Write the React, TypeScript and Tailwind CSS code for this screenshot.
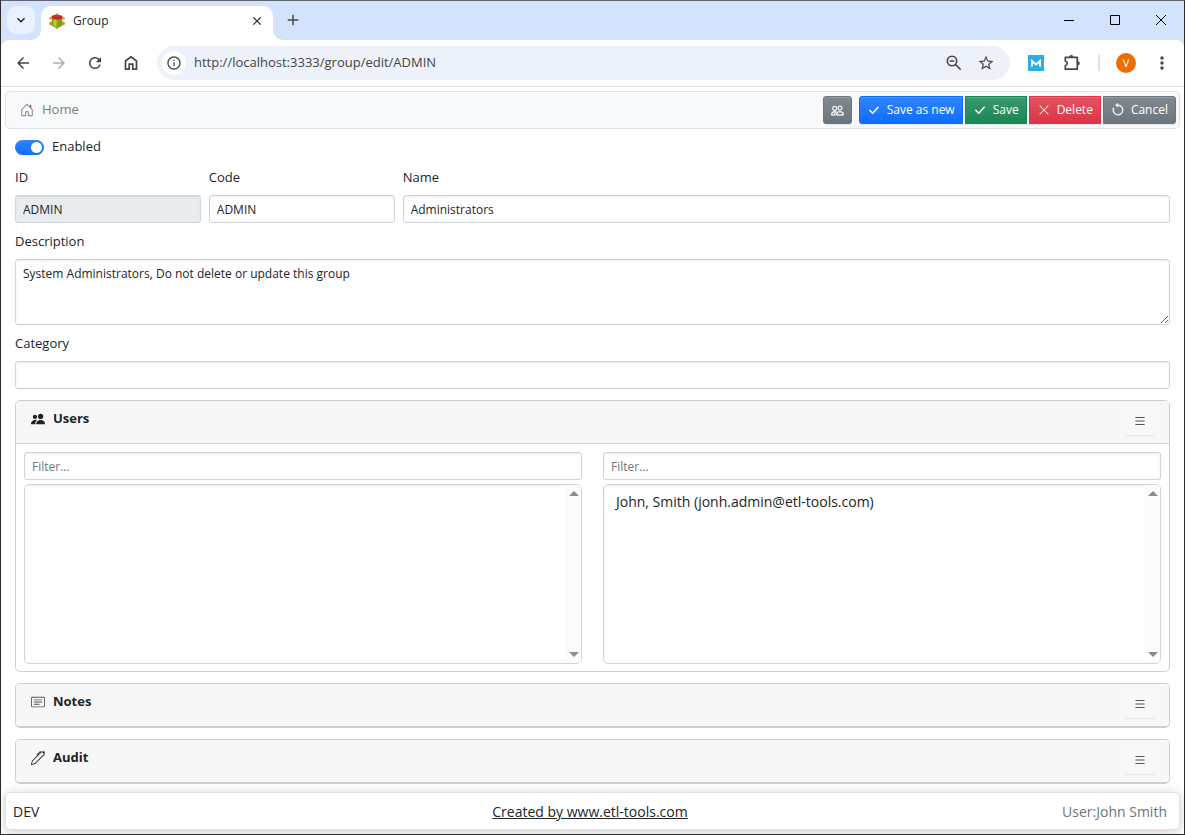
import React, { useState } from 'react';
import {
  BsArrowCounterclockwise,
  BsCardText,
  BsHouseDoor,
  BsList,
  BsPen,
  BsPeople,
  BsPeopleFill,
  BsXLg,
} from 'react-icons/bs';
import {
  MdAdd,
  MdArrowBack,
  MdArrowForward,
  MdClose,
  MdInfoOutline,
  MdKeyboardArrowDown,
  MdMoreVert,
  MdRefresh,
  MdStarBorder,
} from 'react-icons/md';

const inputClass =
  'block w-full h-7 rounded-[3px] border border-[#ced4da] bg-white px-[7px] text-[12px] text-[#212529] shadow-[inset_0_1px_2px_rgba(0,0,0,0.075)] outline-none focus:border-[#86b7fe] placeholder:text-[#6c757d]';
const labelClass = 'block h-9 leading-9 text-[13px]';

function TurtleLogo() {
  return (
    <svg viewBox="0 0 16 16" className="w-4 h-4 shrink-0" aria-hidden="true">
      <circle cx="8" cy="1.900" r="1.700" fill="#d9a441" />
      <circle cx="1.800" cy="5.200" r="1.600" fill="#e8a04e" />
      <circle cx="14.200" cy="5.200" r="1.600" fill="#e8a04e" />
      <circle cx="2" cy="10.500" r="1.900" fill="#ec8a2a" />
      <circle cx="14" cy="10.500" r="1.900" fill="#ec8a2a" />
      <path d="M6 13h4l-.8 2.700H6.800z" fill="#d9922e" />
      <path d="M2.800 4h10.400v7.500c0 1.700-2.500 3-5.200 3s-5.200-1.300-5.200-3z" fill="#6fa516" />
      <path d="M4.500 6.500h3v7.300c-2-.2-3-1.100-3-2.300z" fill="#b5d330" />
      <ellipse cx="8" cy="4" rx="5.400" ry="2.300" fill="#e01c10" />
      <ellipse cx="8" cy="3.200" rx="2.400" ry="1" fill="#a8452a" />
      <circle cx="8" cy="8.800" r="1.200" fill="#e0932c" />
    </svg>
  );
}

function HomeGlyph() {
  return (
    <svg viewBox="0 0 20 20" className="w-5 h-5" fill="none" stroke="currentColor" strokeWidth="1.7" aria-hidden="true">
      <path d="M4.500 8 10 3.800 15.500 8v8.200h-3.700v-5H8.200v5H4.500z" />
    </svg>
  );
}

function ZoomOutGlyph() {
  return (
    <svg viewBox="0 0 20 20" className="w-5 h-5" fill="none" stroke="currentColor" strokeWidth="1.6" aria-hidden="true">
      <circle cx="8" cy="8" r="4.700" />
      <path d="M11.400 11.400 16.700 16.700M5.700 8h4.600" />
    </svg>
  );
}

function PuzzleGlyph() {
  return (
    <svg viewBox="0 0 20 20" className="w-5 h-5" aria-hidden="true">
      <path
        d="M3.300 4.300h12v11.900h-12v-3.700a2.300 2.300 0 0 0 0-4.500z"
        fill="none"
        stroke="#474747"
        strokeWidth="1.700"
        strokeLinejoin="round"
      />
      <path d="M7.300 4a2 2 0 0 1 4 0zM15.800 8.200a2 2 0 0 1 0 4z" fill="#474747" />
    </svg>
  );
}

function MailTile() {
  return (
    <svg viewBox="0 0 16 16" className="w-4 h-4" aria-hidden="true">
      <rect width="16" height="16" fill="#2baee4" />
      <path d="M4 11.500V6l4 3.500L12 6v5.500" fill="none" stroke="#fff" strokeWidth="2" />
    </svg>
  );
}

function CheckGlyph() {
  return (
    <svg viewBox="0 0 14 14" className="w-[14px] h-[14px]" fill="none" stroke="currentColor" strokeWidth="1.5" strokeLinecap="round" strokeLinejoin="round" aria-hidden="true">
      <path d="m2.800 7.300 2.900 2.900 5.500-6" />
    </svg>
  );
}

function TabCorner({ className }: { className: string }) {
  return (
    <svg viewBox="0 0 10 10" className={`absolute bottom-0 w-[10px] h-[10px] ${className}`} aria-hidden="true">
      <path d="M10 0v10H0A10 10 0 0 0 10 0z" fill="#fff" />
    </svg>
  );
}

function IconButton({ label, className = '', children }: { label: string; className?: string; children: React.ReactNode }) {
  return (
    <button type="button" aria-label={label} className={`flex items-center justify-center shrink-0 cursor-pointer ${className}`}>
      {children}
    </button>
  );
}

function BrowserChrome() {
  return (
    <div className="bg-[#d3e3fd] text-[#474747]">
      <div className="flex h-[39px] items-start pt-[5px] pl-[6px]">
        <IconButton label="Search tabs" className="w-7 h-7 rounded-[9px] bg-[#e9f1fe] text-[#1f1f1f]">
          <MdKeyboardArrowDown className="w-4 h-4" />
        </IconButton>
        <div className="relative ml-[6px] flex h-[34px] w-[232px] items-center rounded-t-[10px] bg-white px-2 pb-[5px] text-[#1f1f1f]">
          <TabCorner className="-left-[10px]" />
          <TurtleLogo />
          <span className="ml-2 flex-1 text-[12px]">Group</span>
          <IconButton label="Close tab" className="w-4 h-4">
            <MdClose className="w-[14px] h-[14px]" />
          </IconButton>
          <TabCorner className="-right-[10px] -scale-x-100" />
        </div>
        <IconButton label="New tab" className="ml-[6px] w-7 h-7">
          <MdAdd className="w-[18px] h-[18px]" />
        </IconButton>
        <div className="ml-auto flex h-7 text-black">
          <IconButton label="Minimize" className="w-[46px]">
            <svg viewBox="0 0 10 10" className="w-[10px] h-[10px]"><path d="M0 5.500h10" stroke="currentColor" /></svg>
          </IconButton>
          <IconButton label="Maximize" className="w-[46px]">
            <svg viewBox="0 0 10 10" className="w-[10px] h-[10px]"><path d="M.5.5h9v9h-9z" fill="none" stroke="currentColor" /></svg>
          </IconButton>
          <IconButton label="Close" className="w-[46px]">
            <svg viewBox="0 0 10 10" className="w-[10px] h-[10px]"><path d="m0 0 10 10M10 0 0 10" stroke="currentColor" /></svg>
          </IconButton>
        </div>
      </div>
      <div className="flex h-[47px] items-center rounded-t-[8px] border-b border-[#dcdfe3] bg-white pl-2">
        <IconButton label="Back" className="w-7 h-7 mr-2"><MdArrowBack className="w-[18px] h-[18px]" /></IconButton>
        <IconButton label="Forward" className="w-7 h-7 mr-2 text-[#b0b0b0]"><MdArrowForward className="w-[18px] h-[18px]" /></IconButton>
        <IconButton label="Reload" className="w-7 h-7 mr-2"><MdRefresh className="w-[18px] h-[18px]" /></IconButton>
        <IconButton label="Home" className="w-7 h-7 mr-3"><HomeGlyph /></IconButton>
        <div className="flex h-[34px] flex-1 items-center rounded-full bg-[#edf2fa] pl-[5px] pr-[14px]">
          <span className="flex w-6 h-6 shrink-0 items-center justify-center rounded-full bg-white">
            <MdInfoOutline className="w-4 h-4" />
          </span>
          <input
            aria-label="Address"
            defaultValue="http://localhost:3333/group/edit/ADMIN"
            className="ml-2 min-w-0 flex-1 bg-transparent text-[13px] text-[#444] outline-none"
          />
          <IconButton label="Zoom" className="w-5 h-5 mr-3"><ZoomOutGlyph /></IconButton>
          <IconButton label="Bookmark" className="w-5 h-5"><MdStarBorder className="w-[18px] h-[18px]" /></IconButton>
        </div>
        <IconButton label="Mail" className="ml-[18px] w-4 h-4"><MailTile /></IconButton>
        <IconButton label="Extensions" className="ml-[18px] w-5 h-5"><PuzzleGlyph /></IconButton>
        <span className="ml-4 h-4 w-[2px] bg-[#d3e3fd]" />
        <IconButton label="Profile" className="ml-4 w-5 h-5 rounded-full bg-[#ef6c00] text-[11px] text-white">V</IconButton>
        <IconButton label="Menu" className="ml-4 mr-3 w-5 h-5"><MdMoreVert className="w-5 h-5" /></IconButton>
      </div>
    </div>
  );
}

function ActionButton({ icon, className, children }: { icon: React.ReactNode; className: string; children?: React.ReactNode }) {
  return (
    <button
      type="button"
      className={`flex h-7 items-center justify-center gap-[6px] border bg-linear-to-b from-white/15 to-white/0 px-[7px] text-[12px] text-white shadow-[inset_0_1px_0_rgba(255,255,255,0.15),0_1px_1px_rgba(0,0,0,0.075)] cursor-pointer ${className}`}
    >
      {icon}
      {children}
    </button>
  );
}

function CardHeader({ icon, title, className = '' }: { icon: React.ReactNode; title: string; className?: string }) {
  return (
    <div className={`flex h-[42px] items-start justify-between bg-[#f7f7f7] pl-[15px] pr-[14px] ${className}`}>
      <h2 className="flex h-9 items-center gap-2 text-[13px] font-bold">
        {icon}
        {title}
      </h2>
      <button
        type="button"
        aria-label={`${title} menu`}
        className="mt-[6px] flex h-7 w-[30px] items-center justify-center rounded-[3px] bg-[#f8f8f8] text-[#555] shadow-[0_1px_1px_rgba(0,0,0,0.075)] cursor-pointer"
      >
        <BsList className="w-[14px] h-[14px]" />
      </button>
    </div>
  );
}

function UserList({ label, users }: { label: string; users: string[] }) {
  const [filter, setFilter] = useState('');
  const visible = users.filter((u) => u.toLowerCase().includes(filter.toLowerCase()));

  return (
    <div className="flex-1">
      <input
        aria-label={`Filter ${label}`}
        placeholder="Filter..."
        value={filter}
        onChange={(e) => setFilter(e.target.value)}
        className={inputClass}
      />
      <div className="mt-1 flex h-[180px] overflow-hidden rounded-[5px] border border-[#ced4da] shadow-[inset_0_1px_2px_rgba(0,0,0,0.075)]">
        <select multiple aria-label={label} className="flex-1 overflow-hidden bg-transparent py-[7px] text-[14px] outline-none">
          {visible.map((u) => (
            <option key={u} className="px-3 py-0 leading-5">{u}</option>
          ))}
        </select>
        <div className="flex w-[15px] flex-col items-center justify-between bg-[#fcfcfc] py-[6px]" aria-hidden="true">
          <svg viewBox="0 0 10 5" className="w-[10px] h-[5px]"><path d="M5 0l5 5H0z" fill="#8b8b8b" /></svg>
          <svg viewBox="0 0 10 5" className="w-[10px] h-[5px]"><path d="M0 0h10L5 5z" fill="#8b8b8b" /></svg>
        </div>
      </div>
    </div>
  );
}

export default function App() {
  const [enabled, setEnabled] = useState(true);

  return (
    <div className="flex min-h-screen flex-col border border-[#2b2b2b] border-t-[#5f6470] bg-white font-['Open_Sans','Noto_Sans',sans-serif] text-[#212529]">
      <BrowserChrome />

      <header className="mx-1 mt-1 flex h-[38px] items-center justify-between rounded-[5px] border border-[#dee2e6] bg-[#f8f9fa] pl-[14px] pr-[3px]">
        <a href="#home" className="flex items-center gap-2 text-[13px] text-[#7b7d80]">
          <BsHouseDoor className="w-[14px] h-[14px]" />
          Home
        </a>
        <div className="flex items-center">
          <ActionButton
            icon={<BsPeople className="w-[13px] h-[13px]" strokeWidth="0.4" aria-label="Members" />}
            className="mr-[7px] rounded-[3px] border-[#6c757d] bg-[#6c757d]"
          />
          <div className="flex gap-[2px]">
            <ActionButton icon={<CheckGlyph />} className="rounded-l-[3px] border-[#0d6efd] bg-[#0d6efd]">
              Save as new
            </ActionButton>
            <ActionButton icon={<CheckGlyph />} className="border-[#198754] bg-[#198754]">
              Save
            </ActionButton>
            <ActionButton icon={<BsXLg className="w-[14px] h-[14px] p-px" />} className="border-[#dc3545] bg-[#dc3545]">
              Delete
            </ActionButton>
            <ActionButton icon={<BsArrowCounterclockwise className="w-[14px] h-[14px]" strokeWidth="0.4" />} className="rounded-r-[3px] border-[#6c757d] bg-[#6c757d]">
              Cancel
            </ActionButton>
          </div>
        </div>
      </header>

      <main className="px-[14px]">
        <label className="flex h-[30px] w-fit items-center gap-2 pt-[6px] text-[13px] cursor-pointer">
          <input type="checkbox" role="switch" checked={enabled} onChange={(e) => setEnabled(e.target.checked)} className="peer sr-only" />
          <span className="flex h-[15px] w-[29px] items-center rounded-full bg-[#adb5bd] px-[2px] peer-checked:justify-end peer-checked:bg-linear-to-b peer-checked:from-[#3183fd] peer-checked:to-[#0d6efd]">
            <span className="h-[11px] w-[11px] rounded-full bg-white" />
          </span>
          Enabled
        </label>

        <div className="grid grid-cols-12 gap-x-2">
          <div className="col-span-2">
            <label htmlFor="id" className={labelClass}>ID</label>
            <input id="id" readOnly defaultValue="ADMIN" className={`${inputClass} bg-[#e9ecef]!`} />
          </div>
          <div className="col-span-2">
            <label htmlFor="code" className={labelClass}>Code</label>
            <input id="code" defaultValue="ADMIN" className={inputClass} />
          </div>
          <div className="col-span-8">
            <label htmlFor="name" className={labelClass}>Name</label>
            <input id="name" defaultValue="Administrators" className={inputClass} />
          </div>
        </div>

        <label htmlFor="description" className={labelClass}>Description</label>
        <textarea
          id="description"
          defaultValue="System Administrators, Do not delete or update this group"
          className={`${inputClass} h-[66px]! py-1 leading-5`}
        />

        <label htmlFor="category" className={labelClass}>Category</label>
        <input id="category" className={inputClass} />

        <section className="mt-[11px] overflow-hidden rounded-[5px] border border-[#cfcfcf]">
          <CardHeader icon={<BsPeopleFill className="w-[14px] h-[14px]" />} title="Users" className="border-b border-[#cfcfcf] box-content" />
          <div className="flex gap-[21px] p-2 pb-[7px]">
            <UserList label="Available users" users={[]} />
            <UserList label="Group users" users={['John, Smith (jonh.admin@etl-tools.com)']} />
          </div>
        </section>

        <section className="mt-[11px] overflow-hidden rounded-[5px] border border-b-2 border-[#cfcfcf]">
          <CardHeader icon={<BsCardText className="w-[14px] h-[14px] text-[#555]" />} title="Notes" />
        </section>

        <section className="mt-[11px] overflow-hidden rounded-[5px] border border-b-2 border-[#cfcfcf]">
          <CardHeader icon={<BsPen className="w-[14px] h-[14px]" />} title="Audit" />
        </section>
      </main>

      <footer className="mx-1 mt-auto mb-1 grid h-[38px] grid-cols-3 items-center rounded-[5px] border border-[#dee2e6] bg-white pl-[7px] pr-3 text-[14px] shadow-[0_2px_12px_rgba(0,0,0,0.2)]">
        <span>DEV</span>
        <a href="#etl-tools" className="justify-self-center underline">Created by www.etl-tools.com</a>
        <span className="justify-self-end text-[#6c757d]">User:John Smith</span>
      </footer>
    </div>
  );
}
